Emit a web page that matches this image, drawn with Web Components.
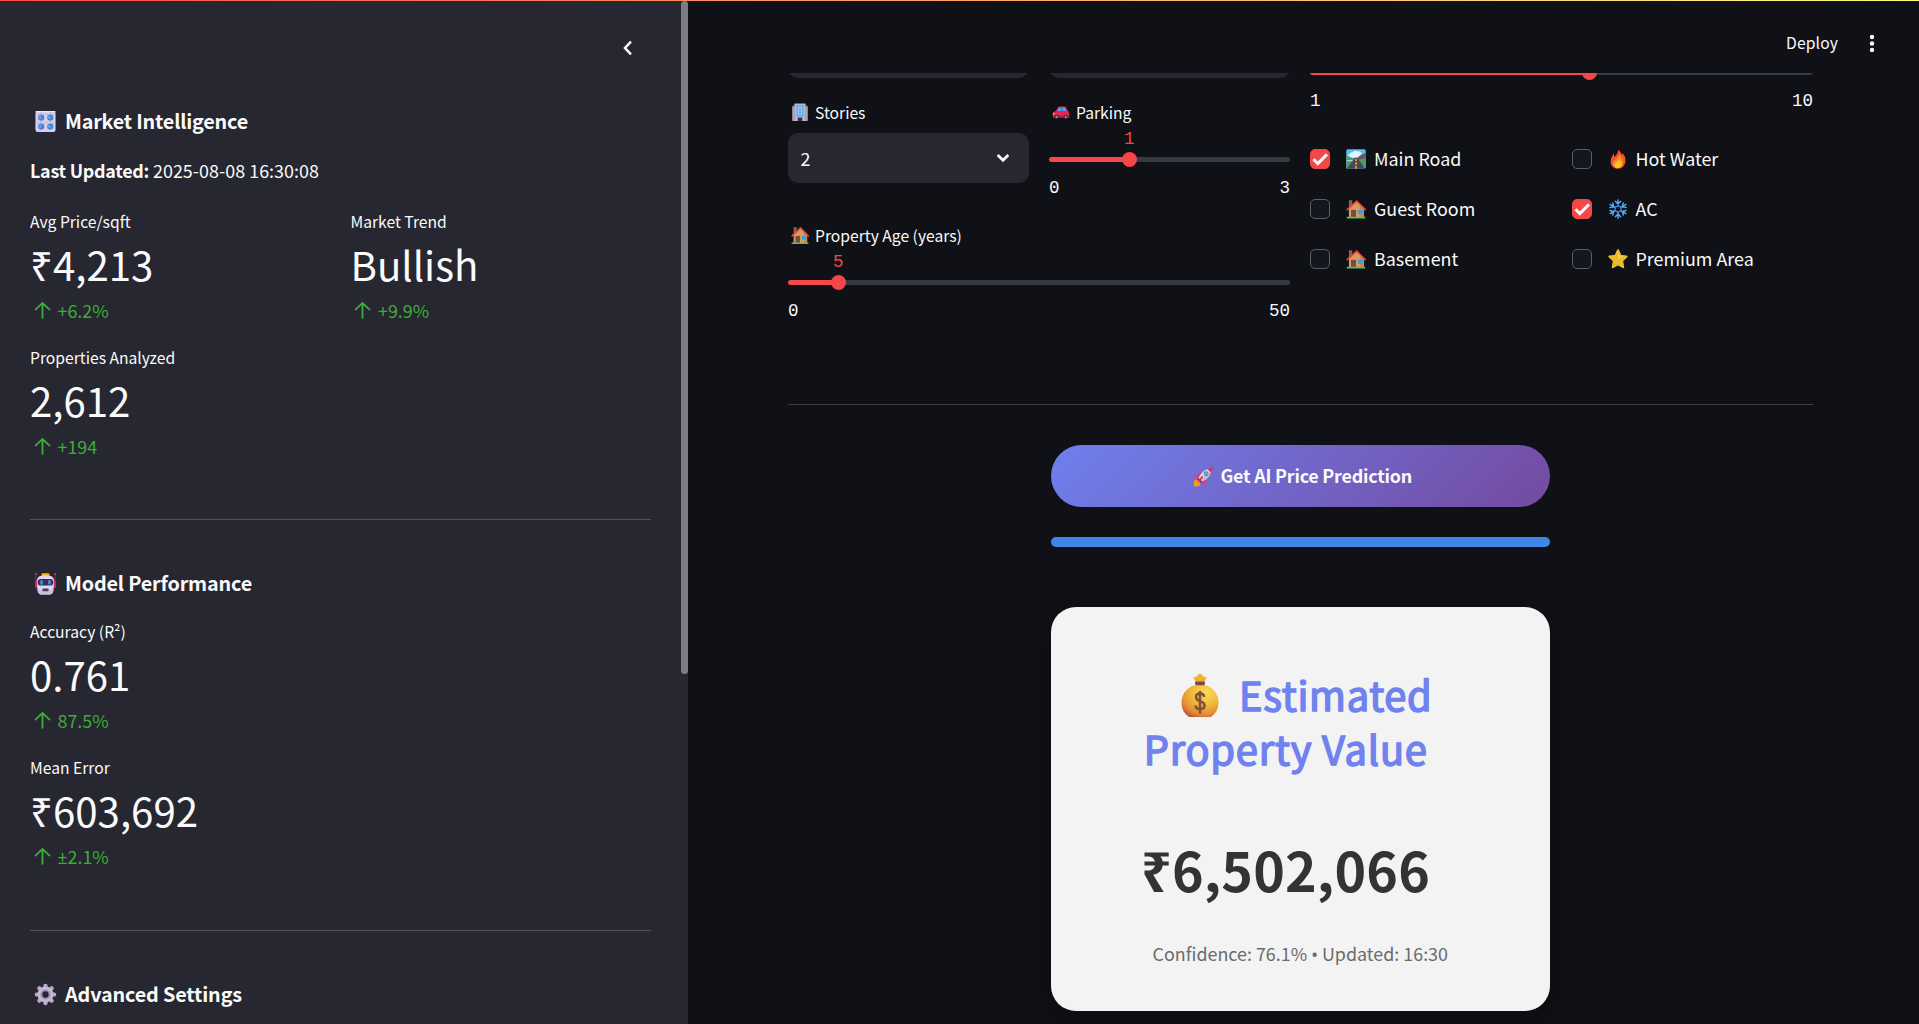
<!DOCTYPE html>
<html lang="en">
<head>
<meta charset="utf-8">
<title>Property Price Prediction</title>
<style>
  html, body { margin: 0; height: 100%; overflow: hidden; background: #0f1116; }
  body { font-family: "Noto Sans CJK SC", "Noto Sans", sans-serif; color: #fafafa; }
</style>
</head>
<body>
<price-app></price-app>
<script>
const ICONS = {
  knobs: `<rect x="1.5" y="1" width="21" height="22" rx="3" fill="#d9cbea"/><rect x="1.5" y="1" width="21" height="1.4" rx=".7" fill="#efe6f7"/>
    <g fill="#3f83d6"><circle cx="7.5" cy="8" r="3.2"/><circle cx="17" cy="8" r="3.2"/><circle cx="7.5" cy="17.3" r="3.2"/><circle cx="17" cy="17.3" r="3.2"/></g>
    <g fill="#6fb0f0"><circle cx="7" cy="7.6" r="1.6"/><circle cx="16.500" cy="7.6" r="1.6"/><circle cx="7" cy="16.900" r="1.6"/><circle cx="16.500" cy="16.900" r="1.6"/></g>
    <g stroke="#8d7f9e" stroke-width=".8"><path d="M4 4l1 1M7.500 2.500v1.300M11 4l-1 1M13.500 4l1 1M17 2.500v1.300M20.500 4l-1 1M4 13l1 1M7.500 11.800v1.300M11 13l-1 1M13.500 13l1 1M17 11.800v1.300M20.500 13l-1 1"/></g>
    <path d="M7 8.200l2-1.600M16.500 8.200l2-1.600M7 17l2 1M16.500 17.300l1.800-1.600" stroke="#2a5fa8" stroke-width=".8"/>`,
  robot: `<rect x="1" y="8.500" width="3" height="8.500" rx="1.500" fill="#c9285c"/><rect x="20" y="8.500" width="3" height="8.500" rx="1.500" fill="#c9285c"/>
    <path d="M2 10V2.500M22 10V2.500" stroke="#a52050" stroke-width="1"/><circle cx="2" cy="2" r="1" fill="#e23a70"/><circle cx="22" cy="2" r="1" fill="#e23a70"/>
    <rect x="8" y="1.300" width="8" height="4" rx="1" fill="#f9b71c"/><path d="M3 10Q3 3.700 9 3.700h6q6 0 6 6.300L20.300 19q-.4 4.500-4.500 4.500H8.200q-4.100 0-4.500-4.500z" fill="#e2d7ec"/><path d="M3.800 18l.3 2q.7 3.500 4.200 3.500h7.400q3.500 0 4.200-3.500l.3-2q-8.200 3-16.400 0z" fill="#cdbde0"/>
    <rect x="3.800" y="7.200" width="16.400" height="7" rx="3.300" fill="#34305a"/><rect x="6.500" y="8.300" width="2.800" height="5" rx="1.300" fill="#3b8fd8"/><rect x="14.700" y="8.300" width="2.800" height="5" rx="1.300" fill="#3b8fd8"/><rect x="8.800" y="17.300" width="6.400" height="2.800" rx=".8" fill="#4d3b66"/>`,
  gear: `<g fill="#b9aacb"><rect x="9.800" y=".8" width="4.400" height="22.400" rx="2"/><rect x=".8" y="9.800" width="22.400" height="4.400" rx="2"/><g transform="rotate(45 12 12)"><rect x="9.800" y=".8" width="4.400" height="22.400" rx="2"/><rect x=".8" y="9.800" width="22.400" height="4.400" rx="2"/></g></g>
    <circle cx="12" cy="12" r="8.300" fill="#c5b8d5"/><circle cx="12" cy="12" r="5.300" fill="#9e8fb3"/><circle cx="12" cy="12" r="3.300" fill="#262730"/>`,
  office: `<rect x="1.500" y="3.500" width="21" height="20" rx="1" fill="#8f8499"/><rect x="4.500" y=".8" width="15" height="22.700" rx="1" fill="#bdb4c6"/>
    <rect x="7" y="3" width="10" height="14.500" fill="#4eaef0"/><path d="M10.300 3v14.500M13.700 3v14.500M7 6.500h10M7 10.200h10M7 13.900h10" stroke="#b3cde6" stroke-width=".9"/><rect x="9" y="18.800" width="6" height="4.700" fill="#3a3148"/><path d="M3 6v17M21 6v17" stroke="#c6bdce" stroke-width="1"/>`,
  car: `<path d="M1 15q0-3.500 4-4.500L8 5.700Q8.600 4.500 10 4.500h6.500q1.700 0 2.400 1.300L21 10q2 1 2 4v4q0 1-1 1H2q-1 0-1-1z" fill="#e5264c"/><path d="M7 10.300l2-3.700q.4-.8 1.200-.8h2.300v4.500zM13.700 5.800h2.600q.9 0 1.300.8l1.700 3.700h-5.600z" fill="#4aa0f2"/><circle cx="2.300" cy="13.800" r="1.300" fill="#fbb51d"/><rect x="2" y="16.500" width="20" height="2.500" fill="#a51b4a"/><circle cx="6" cy="18.300" r="2.800" fill="#352b43"/><circle cx="18.300" cy="18.300" r="2.800" fill="#352b43"/><circle cx="6" cy="18.300" r="1.300" fill="#b3a8c0"/><circle cx="18.300" cy="18.300" r="1.300" fill="#b3a8c0"/>`,
  house: `<rect x="3.500" y="1.500" width="4" height="9" fill="#8a6354"/><path d="M3.500 11L13 3l8.500 8v11h-18z" fill="#d99a62"/><path d="M17 8l4.500 4v10H17z" fill="#c98852"/><path d="M1.500 12.800L12.800 2.500 23 12.800" fill="none" stroke="#e8492f" stroke-width="2" stroke-linejoin="round" stroke-linecap="round"/><rect x="6" y="13" width="6" height="9.500" fill="#7c4a43"/><rect x="14.500" y="13" width="5.500" height="5" fill="#35a0ee"/><path d="M.8 21.300h22.400v1.300q0 .9-.9.900H1.700q-.9 0-.9-.9z" fill="#4dc267"/>`,
  road: `<rect x=".3" y=".3" width="23.400" height="23.400" rx="2" fill="#54c0f5"/><path d="M4 10Q3 4 8 4q2-3 6-1 4-1 5 3v5z" fill="#e8f2f7"/><path d="M.3 8l5 2 5 2v11.700H.3z" fill="#4f9d78"/><path d="M13 11l5-4 5.700-2.500v14L13 20z" fill="#5d5a72"/><path d="M15 13l8.700-2v9l-5 3z" fill="#529a6c"/><path d="M10.500 10.500h3L23 23.700H1z" fill="#4a4558"/><path d="M12 12v2.500M12 16v3M12 20.500v3.200" stroke="#ffc928" stroke-width="1.600"/><path d="M2 7l6 3.300M1 14h7" stroke="#d9e6df" stroke-width="1"/>`,
  fire: `<path d="M12.500.5c1.200 2.400 3.500 3.200 4 6.500.6-.6.900-1.500.9-2.300 2.600 3 4.300 6.300 3.500 11-.8 5-4.600 8-9 8-5 0-8.700-3.300-8.700-8.500C3.200 11 5 9 6.800 5.500c.5 1.300.6 2.500.4 4C10.500 7.500 12 4.500 12.500.5z" fill="#f4512c"/><path d="M13.800 6c1.200 3.500 5.200 5.500 4.400 10.500-.6 4.300-3.300 6.500-6.500 6.500-3.500 0-6-2.200-6-5.500 0-3.700 6.500-5.500 8.100-11.500z" fill="#fb8a22"/><path d="M14 12c.5 2.500 3 3.500 2.500 6.700-.5 2.700-2.500 4.200-4.700 4.200-2.400 0-4-1.500-4-3.700 0-3 4.800-3.500 6.200-7.200z" fill="#fbc32a"/>`,
  snow: `<g stroke="#58adf5" stroke-width="1.700" stroke-linecap="round" fill="none"><path d="M12 1v22M8.800 2.800L12 6l3.200-3.200M8.800 21.200L12 18l3.200 3.200"/><path transform="rotate(60 12 12)" d="M12 1v22M8.800 2.800L12 6l3.200-3.200M8.800 21.200L12 18l3.200 3.200"/><path transform="rotate(120 12 12)" d="M12 1v22M8.800 2.800L12 6l3.200-3.200M8.800 21.200L12 18l3.200 3.200"/></g><path d="M12 8l3.500 2v4L12 16l-3.500-2v-4z" fill="#0f1116" stroke="#4489ea" stroke-width="1.500"/>`,
  star: `<path d="M12 1.500l3 6.500 7.300 1-5.300 5.200 1.300 7.600L12 18.500l-6.300 3.300L7 14.200 1.700 9 9 8z" fill="#e6bd2a" stroke="#e6bd2a" stroke-width="2.400" stroke-linejoin="round"/><path d="M12 2.500l2.400 5.800 6.500 1.200-8.900 3z" fill="#efcd40"/>`,
  rocket: `<path d="M4 12.500l5-5 4 1-5.500 6zM11.500 20l5-5-.5-4-6.500 6z" fill="#e0285a"/><path d="M1 10.800l6-1-3 5zM13 23l1-6-5 3z" fill="#f0396a"/><path d="M6 14Q9 5.500 19.500 2.500l2 2Q18.500 15 10 18z" fill="#ded3e4"/><path d="M10 18Q18.500 15 21.500 4.500L8 16z" fill="#c5b6d2"/><path d="M16.500 3.600Q19.500 1.300 23 1q-.3 3.500-2.600 6.500z" fill="#ea2c50"/><circle cx="15" cy="8.800" r="2.700" fill="#5a6f96"/><circle cx="15" cy="8.800" r="1.900" fill="#58b7f3"/><path d="M6 13.500l4.500 4.500-1.300 1-4.200-4.200z" fill="#574264"/><path d="M1 17.500q1.500-2.500 4-1.500l3 3q1 2.500-1.500 4L1 23.500z" fill="#f69a1e"/><path d="M6 18l5-6" stroke="#d8285c" stroke-width="2"/>`,
  bag: `<defs><radialGradient id="g" cx=".65" cy=".25" r=".85"><stop offset="0" stop-color="#fbdc55"/><stop offset=".45" stop-color="#f1b93b"/><stop offset=".8" stop-color="#e38a35"/><stop offset="1" stop-color="#b9503c"/></radialGradient></defs>
    <path d="M14.500 9L12 3.800q2 .7 3.200.2.300-1.500 1.800-1.700Q18 .8 19 .8t2 1.500q1.500.2 1.800 1.700 1.200.5 3.200-.2L23.500 9z" fill="#f3b233"/><path d="M14 12Q.5 17 .5 30 .5 39 8 44.300h22Q37.500 39 37.500 30 37.500 17 24 12z" fill="url(#g)"/><rect x="14" y="8.500" width="10" height="3.800" rx="1.500" fill="#7b4a43"/>
    <path d="M23.200 24q-.5-3.300-4.200-3.300-4 0-4 3.400 0 3 4 4.200 4.500 1.300 4.500 4.500 0 3.600-4.500 3.600-4.200 0-4.500-3.800M19 18v23" fill="none" stroke="#81503f" stroke-width="2.500"/>`,
  up: `<path d="M12 22V3M2.500 11.500L12 2.500 21.500 11.500" fill="none" stroke="#3dac38" stroke-width="2.300"/>`
};
const VIEW = { bag: '0 0 38 44.3' };

const define = (tag, css, html, setup) => customElements.define(tag, class extends HTMLElement {
  connectedCallback() {
    if (this.shadowRoot) return;
    const root = this.attachShadow({ mode: 'open' });
    const fill = html.replace(/\{(\w+)\}/g, (_, k) => this.getAttribute(k) ?? '');
    root.innerHTML = `<style>${css}</style>${fill}`;
    if (setup) setup(this, root);
  }
});

define('text-line', ':host{display:block;white-space:pre;font-kerning:normal}', '<slot></slot>', el => {
  const a = n => el.getAttribute(n);
  el.style.fontSize = a('s') + 'px';
  el.style.lineHeight = (a('lh') || 30) + 'px';
  if (a('b')) el.style.fontWeight = a('b');
  if (a('c')) el.style.color = a('c');
  if (a('k')) el.style.webkitTextStroke = a('k') + 'px currentColor';
  if (a('dx')) el.style.marginLeft = a('dx') + 'px';
  if (a('w')) {
    const r = document.createRange();
    r.selectNodeContents(el);
    const n = el.textContent.length;
    el.style.letterSpacing = ((+a('w') - r.getBoundingClientRect().width) / n).toFixed(3) + 'px';
  }
});

define('emoji-icon', ':host{display:block;flex:none}svg{display:block;width:100%;height:100%}', '<svg preserveAspectRatio="none"></svg>', (el, root) => {
  const n = el.getAttribute('name');
  el.style.width = el.getAttribute('w') + 'px';
  el.style.height = (el.getAttribute('h') || el.getAttribute('w')) + 'px';
  const svg = root.querySelector('svg');
  svg.setAttribute('viewBox', VIEW[n] || '0 0 24 24');
  svg.innerHTML = ICONS[n];
});

define('side-heading', ':host{display:flex;height:34px;align-items:center;padding-left:4px;gap:8px}',
  '<emoji-icon name="{icon}" w="23" h="23"></emoji-icon><text-line s="19.8" lh="34" b="600" w="{w}">{text}</text-line>');

define('metric-card', `:host{display:block;flex:1}
  .v{margin-top:2px}.d{display:flex;align-items:center;gap:6px;padding-left:2.500px;margin-top:4px;margin-bottom:1px}`,
  `<text-line s="15.67" lh="26">{label}</text-line>
   <text-line class="v" s="40.2" lh="54">{value}</text-line>
   <div class="d"><emoji-icon name="up" w="19" h="19"></emoji-icon><text-line s="17.9" lh="30" c="#3dac38"><slot></slot></text-line></div>`);

define('rule-line', ':host{display:block;height:1px;background:rgba(250,250,250,.2)}', '');

define('side-bar', `:host{display:flex;width:688px;height:1024px;background:#262730;overflow:hidden;flex:none}
  .body{flex:1;padding:0 30px}.top{height:104px;display:flex;justify-content:flex-end;padding-right:18px}
  .top svg{margin-top:39px}.row{display:flex;gap:20px}
  .stack{display:flow-root}.stack>*+*{margin-top:19px}
  .bar{width:7px;height:673px;margin-top:1px;border-radius:4px;background:#7c7d83}
  .sym{font-family:"Noto Sans",sans-serif;font-size:.98em}`,
  `<div class="body">
    <div class="top"><svg width="11" height="18" viewBox="0 0 11 18"><path d="M9 2.700L3 9l6 6.300" fill="none" stroke="#fafafa" stroke-width="2.500"/></svg></div>
    <side-heading icon="knobs" w="183" text="Market Intelligence"></side-heading>
    <div class="row" style="gap:0;margin-top:17px;margin-bottom:24px"><text-line s="17.9" b="600" w="123">Last Updated: </text-line><text-line s="17.9" w="166">2025-08-08 16:30:08</text-line></div>
    <div class="stack">
      <div class="row"><metric-card label="Avg Price/sqft" value="₹4,213">+6.2%</metric-card><metric-card label="Market Trend" value="Bullish">+9.9%</metric-card></div>
      <metric-card style="height:117px" label="Properties Analyzed" value="2,612">+194</metric-card>
    </div>
    <rule-line style="margin:57px 0 46px"></rule-line>
    <side-heading icon="robot" w="187" text="Model Performance"></side-heading>
    <div class="stack" style="margin-top:19px"><metric-card style="height:117px" label="Accuracy (R²)" value="0.761">87.5%</metric-card>
      <metric-card style="height:117px" label="Mean Error" value="₹603,692"><span class="sym">±</span>2.1%</metric-card></div>
    <rule-line style="margin:58px 0 46px"></rule-line>
    <side-heading icon="gear" w="177" text="Advanced Settings"></side-heading>
  </div><div class="bar"></div>`);

define('top-header', `:host{display:flex;height:73px;flex:none;justify-content:flex-end;padding-right:42px;box-sizing:border-box}
  text-line{margin-top:30px}svg{margin:33px 0 0 29px}`,
  `<text-line s="15.67" lh="26" w="52">Deploy</text-line><svg width="10" height="22" viewBox="0 0 10 22" fill="#fafafa"><circle cx="5" cy="4" r="2.200"/><circle cx="5" cy="10.500" r="2.200"/><circle cx="5" cy="17" r="2.200"/></svg>`);

define('field-label', ':host{display:flex;align-items:center;height:26px;padding-left:2.500px;gap:6.500px}text-line{margin-top:2px}',
  '<emoji-icon name="{icon}" w="18" h="18.5"></emoji-icon><text-line s="15.67" lh="26">{text}</text-line>');

define('select-box', `:host{display:flex;height:50px;box-sizing:border-box;border-radius:10px;background:#262730;align-items:center;justify-content:space-between;padding:0 18px 0 12.500px}`,
  `<text-line s="17.9" lh="48">{value}</text-line><svg width="16" height="14" viewBox="0 0 16 14"><path d="M2.700 4L8 9.200 13.300 4" fill="none" stroke="#fafafa" stroke-width="2.800"/></svg>`);

define('range-slider', `:host{display:block;font-family:"Liberation Mono",monospace}
  .l{height:26px;font-family:"Noto Sans CJK SC",sans-serif}
  .t{position:relative;height:5px;border-radius:3px;margin-top:32px;background:linear-gradient(to right,#f54747 var(--p),#373943 var(--p))}
  .k{position:absolute;left:var(--p);top:-5px;width:15px;height:15px;margin-left:-7.500px;border-radius:50%;background:#f54747}
  .n{position:absolute;left:var(--p);top:-28px;transform:translateX(-50%);color:#f54747;font-size:17.500px;line-height:20px}
  .m{display:flex;justify-content:space-between;margin-top:16px;font-size:17.500px;line-height:20px}`,
  `<div class="l"><slot></slot></div><div class="t"><div class="k"></div><div class="n">{value}</div></div><div class="m"><span>{min}</span><span>{max}</span></div>`,
  el => el.style.setProperty('--p', el.getAttribute('at') + '%'));

define('check-item', `:host{display:flex;height:50px;align-items:center}
  .b{width:20px;height:20px;box-sizing:border-box;border-radius:5px;border:1px solid #5d5f66;background:#131720;flex:none;margin-right:16px}
  :host([on]) .b{background:#f54747;border-color:#f54747}svg{display:none}:host([on]) svg{display:block;margin:-1px}
  text-line{margin:-2px 0 0 8px}`,
  `<div class="b"><svg width="20" height="20" viewBox="0 0 20 20"><path d="M3.500 10.300l4.300 4.300L17 5.400" fill="none" stroke="#fafafa" stroke-width="3"/></svg></div><emoji-icon name="{icon}" w="20"></emoji-icon><text-line s="17.9">{text}</text-line>`);

define('predict-button', `:host{display:flex;width:499px;height:62px;border-radius:31px;background:linear-gradient(135deg,#6f80ee,#744aa0);align-items:center;justify-content:center;gap:6.500px;box-sizing:border-box;padding-left:4px}text-line{margin-top:-2px}`,
  '<emoji-icon name="rocket" w="21"></emoji-icon><text-line s="17.9" lh="36" b="600" w="191.5">Get AI Price Prediction</text-line>');

define('result-card', `:host{display:block;width:499px;height:404px;border-radius:25px;background:#f3f3f3;box-shadow:0 10px 30px rgba(0,0,0,.3);box-sizing:border-box;padding:60px 0 0 92px}
  .r{display:flex;height:54px}emoji-icon{margin:6px 20px 0 38px}
  .amount{margin-top:57px;margin-left:-2px}.c{margin-top:32px}
  .sym{font-family:"Noto Sans",sans-serif}`,
  `<div class="r"><emoji-icon name="bag" w="38" h="44"></emoji-icon><text-line s="39.8" lh="54" k="1.5" w="193.5" c="#6f82ee">Estimated</text-line></div>
   <text-line s="39.8" lh="54" k="1.5" w="284" dx="0.7" c="#6f82ee">Property Value</text-line>
   <text-line class="amount" s="53.7" lh="74" b="700" c="#333" w="289">₹6,502,066</text-line>
   <text-line class="c" s="17.9" c="#6b6b6b" dx="9.5" w="295.5">Confidence: 76.1% <span class="sym">•</span> Updated: 16:30</text-line>`);

define('main-panel', `:host{display:flex;flex-direction:column;flex:1;min-width:0;height:1024px;background:#0f1116}
  .scroll{flex:1;overflow:hidden;padding:0 106px 0 100px}
  .cols{display:flex;gap:20px;height:331px}.left{width:502px;flex:none}.right{flex:1;min-width:0}
  .pair{display:grid;grid-template-columns:1fr 1fr;column-gap:20px}
  .cut{margin-top:-45px}.gap{margin-top:21px}.sel{margin-top:8px}
  .center{display:flex;flex-direction:column;align-items:center}
  .progress{width:499px;height:10px;border-radius:5px;background:#4086e6;margin:30px 0 60px}`,
  `<top-header></top-header>
   <div class="scroll"><div class="cols">
     <div class="left"><div class="pair">
        <div><select-box class="cut"></select-box><field-label class="gap" icon="office" text="Stories"></field-label><select-box class="sel" value="2"></select-box></div>
        <div><select-box class="cut"></select-box><range-slider class="gap" value="1" min="0" max="3" at="33.33"><field-label icon="car" text="Parking"></field-label></range-slider></div>
      </div>
      <range-slider style="margin-top:24px" value="5" min="0" max="50" at="10"><field-label icon="house" text="Property Age (years)"></field-label></range-slider>
     </div>
     <div class="right"><range-slider style="margin-top:-61px" min="1" max="10" at="55.56"></range-slider>
      <div class="pair" style="margin-top:23px">
        <check-item on icon="road" text="Main Road"></check-item><check-item icon="fire" text="Hot Water"></check-item>
        <check-item icon="house" text="Guest Room"></check-item><check-item on icon="snow" text="AC"></check-item>
        <check-item icon="house" text="Basement"></check-item><check-item icon="star" text="Premium Area"></check-item>
      </div></div>
    </div>
    <rule-line></rule-line>
    <div class="center"><predict-button style="margin-top:40px"></predict-button><div class="progress"></div><result-card></result-card></div>
   </div>`);

define('price-app', `:host{display:flex;width:1919px;height:1024px;position:relative;overflow:hidden}
  .deco{position:absolute;inset:0 0 auto;height:1px;background:linear-gradient(90deg,#ff4b4b,#fffd80)}`,
  '<side-bar></side-bar><main-panel></main-panel><div class="deco"></div>');
</script>
</body>
</html>
